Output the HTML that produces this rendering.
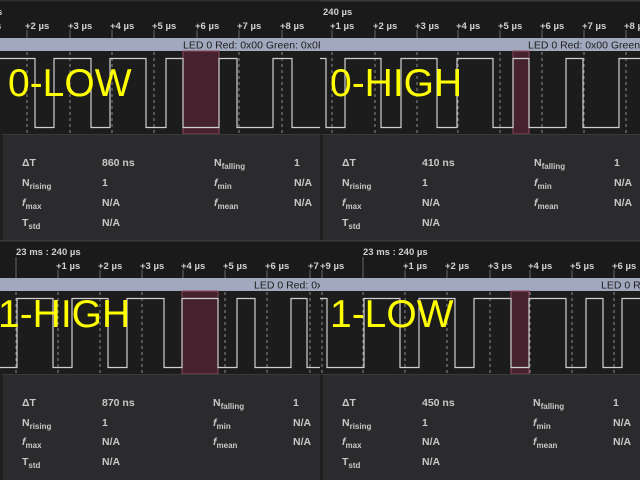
<!DOCTYPE html>
<html><head><meta charset="utf-8"><style>
*{margin:0;padding:0;box-sizing:border-box}
body{width:640px;height:480px;background:#1c1c1c;overflow:hidden;font-family:"Liberation Sans",sans-serif;position:relative}
.q{position:absolute;width:320px;height:240px;overflow:hidden}
.q svg{position:absolute;left:0;top:0}
.st{position:absolute;left:0;top:134px;width:320px;height:106px;background:#2b2b2d;border-top:1px solid #3a3a3c;border-left:3px solid #1e1e1e}
.st div{position:absolute;font-size:10.5px;font-weight:bold;color:#c8c8c8;white-space:nowrap}
.st sub{font-size:8px;vertical-align:-3px}
.st i{font-style:italic;font-weight:bold}
.big{position:absolute;font-size:39px;color:#ffff00;line-height:1}
</style></head><body>

<!-- TL -->
<div class="q" style="left:0;top:0">
<svg width="320" height="134" font-family="Liberation Sans" font-weight="bold" font-size="9.5" fill="#d0d0d0">
<rect x="0" y="0" width="320" height="38" fill="#1a1a1a"/>
<rect x="0" y="0" width="320" height="1.5" fill="#2c2c2c"/>
<text x="-3" y="15">s</text><text x="-4" y="29">s</text>
<g stroke="#8a8a8a" stroke-dasharray="3,3" stroke-width="1">
<line x1="27" y1="52" x2="27" y2="134"/><line x1="70" y1="52" x2="70" y2="134"/><line x1="112" y1="52" x2="112" y2="134"/><line x1="154" y1="52" x2="154" y2="134"/><line x1="197" y1="52" x2="197" y2="134"/><line x1="239" y1="52" x2="239" y2="134"/><line x1="282" y1="52" x2="282" y2="134"/></g>
<g stroke="#666"><line x1="27" y1="30" x2="27" y2="38"/><line x1="70" y1="30" x2="70" y2="38"/><line x1="112" y1="30" x2="112" y2="38"/><line x1="154" y1="30" x2="154" y2="38"/><line x1="197" y1="30" x2="197" y2="38"/><line x1="239" y1="30" x2="239" y2="38"/><line x1="282" y1="30" x2="282" y2="38"/></g>
<text x="25" y="29">+2 µs</text><text x="68" y="29">+3 µs</text><text x="110" y="29">+4 µs</text><text x="152" y="29">+5 µs</text><text x="195" y="29">+6 µs</text><text x="237" y="29">+7 µs</text><text x="280" y="29">+8 µs</text>
<rect x="0" y="38" width="320" height="13" fill="#a0a9bd"/>
<text x="183" y="48.5" font-weight="normal" font-size="10.5" fill="#1e1e1e">LED 0 Red: 0x00 Green: 0x0F B</text>
<rect x="183" y="51" width="36" height="83" fill="#46222f" stroke="#8a4a60"/>
<polyline fill="none" stroke="#cfcfcf" stroke-width="1.2" points="0,58.5 35,58.5 35,127.5 54,127.5 54,58.5 91,58.5 91,127.5 110,127.5 110,58.5 146,58.5 146,127.5 166,127.5 166,58.5 183,58.5 183,127.5 219,127.5 219,58.5 237,58.5 237,127.5 273,127.5 273,58.5 292,58.5 292,127.5 320,127.5"/>
</svg>
<div class="big" style="left:8px;top:64px">0-LOW</div>
<div class="st">
<div style="left:19px;top:22px">ΔT</div><div style="left:99px;top:22px">860 ns</div><div style="left:211px;top:22px">N<sub>falling</sub></div><div style="left:291px;top:22px">1</div>
<div style="left:19px;top:42px">N<sub>rising</sub></div><div style="left:99px;top:42px">1</div><div style="left:211px;top:42px"><i>f</i><sub>min</sub></div><div style="left:291px;top:42px">N/A</div>
<div style="left:19px;top:62px"><i>f</i><sub>max</sub></div><div style="left:99px;top:62px">N/A</div><div style="left:211px;top:62px"><i>f</i><sub>mean</sub></div><div style="left:291px;top:62px">N/A</div>
<div style="left:19px;top:82px">T<sub>std</sub></div><div style="left:99px;top:82px">N/A</div>
</div>
</div>

<!-- TR -->
<div class="q" style="left:320px;top:0">
<svg width="320" height="134" font-family="Liberation Sans" font-weight="bold" font-size="9.5" fill="#d0d0d0">
<rect x="0" y="0" width="320" height="38" fill="#1a1a1a"/>
<rect x="0" y="0" width="320" height="1.5" fill="#3a3a3a"/>
<text x="3" y="15">240 µs</text>
<g stroke="#8a8a8a" stroke-dasharray="3,3"><line x1="12" y1="52" x2="12" y2="134"/><line x1="55" y1="52" x2="55" y2="134"/><line x1="97" y1="52" x2="97" y2="134"/><line x1="138" y1="52" x2="138" y2="134"/><line x1="180" y1="52" x2="180" y2="134"/><line x1="222" y1="52" x2="222" y2="134"/><line x1="264" y1="52" x2="264" y2="134"/><line x1="306" y1="52" x2="306" y2="134"/></g>
<g stroke="#666"><line x1="12" y1="30" x2="12" y2="38"/><line x1="55" y1="30" x2="55" y2="38"/><line x1="97" y1="30" x2="97" y2="38"/><line x1="138" y1="30" x2="138" y2="38"/><line x1="180" y1="30" x2="180" y2="38"/><line x1="222" y1="30" x2="222" y2="38"/><line x1="264" y1="30" x2="264" y2="38"/><line x1="306" y1="30" x2="306" y2="38"/></g>
<text x="10" y="29">+1 µs</text><text x="53" y="29">+2 µs</text><text x="95" y="29">+3 µs</text><text x="136" y="29">+4 µs</text><text x="178" y="29">+5 µs</text><text x="220" y="29">+6 µs</text><text x="262" y="29">+7 µs</text><text x="304" y="29">+8 µs</text>
<rect x="0" y="38" width="320" height="13" fill="#a0a9bd"/>
<text x="208" y="48.5" font-weight="normal" font-size="10.5" fill="#1e1e1e">LED 0 Red: 0x00 Green: 0</text>
<rect x="193" y="51" width="16" height="83" fill="#46222f" stroke="#8a4a60"/>
<polyline fill="none" stroke="#cfcfcf" stroke-width="1.2" points="0,58.5 6,58.5 6,127.5 25,127.5 25,58.5 61,58.5 61,127.5 81,127.5 81,58.5 117,58.5 117,127.5 137,127.5 137,58.5 173,58.5 173,127.5 193,127.5 193,58.5 209,58.5 209,127.5 246,127.5 246,58.5 263,58.5 263,127.5 299,127.5 299,58.5 320,58.5"/>
</svg>
<div class="big" style="left:10px;top:64px">0-HIGH</div>
<div class="st">
<div style="left:19px;top:22px">ΔT</div><div style="left:99px;top:22px">410 ns</div><div style="left:211px;top:22px">N<sub>falling</sub></div><div style="left:291px;top:22px">1</div>
<div style="left:19px;top:42px">N<sub>rising</sub></div><div style="left:99px;top:42px">1</div><div style="left:211px;top:42px"><i>f</i><sub>min</sub></div><div style="left:291px;top:42px">N/A</div>
<div style="left:19px;top:62px"><i>f</i><sub>max</sub></div><div style="left:99px;top:62px">N/A</div><div style="left:211px;top:62px"><i>f</i><sub>mean</sub></div><div style="left:291px;top:62px">N/A</div>
<div style="left:19px;top:82px">T<sub>std</sub></div><div style="left:99px;top:82px">N/A</div>
</div>
</div>

<!-- BL -->
<div class="q" style="left:0;top:240px">
<svg width="320" height="134" font-family="Liberation Sans" font-weight="bold" font-size="9.5" fill="#d0d0d0">
<rect x="0" y="0" width="320" height="38" fill="#1a1a1a"/>
<rect x="0" y="0" width="320" height="1.5" fill="#3a3a3a"/>
<text x="16" y="15">23 ms : 240 µs</text>
<line x1="16" y1="17" x2="16" y2="38" stroke="#666"/>
<g stroke="#8a8a8a" stroke-dasharray="3,3"><line x1="16" y1="52" x2="16" y2="134"/><line x1="58" y1="52" x2="58" y2="134"/><line x1="100" y1="52" x2="100" y2="134"/><line x1="142" y1="52" x2="142" y2="134"/><line x1="183" y1="52" x2="183" y2="134"/><line x1="225" y1="52" x2="225" y2="134"/><line x1="267" y1="52" x2="267" y2="134"/><line x1="310" y1="52" x2="310" y2="134"/></g>
<g stroke="#666"><line x1="58" y1="30" x2="58" y2="38"/><line x1="100" y1="30" x2="100" y2="38"/><line x1="142" y1="30" x2="142" y2="38"/><line x1="183" y1="30" x2="183" y2="38"/><line x1="225" y1="30" x2="225" y2="38"/><line x1="267" y1="30" x2="267" y2="38"/><line x1="310" y1="30" x2="310" y2="38"/></g>
<text x="56" y="29">+1 µs</text><text x="98" y="29">+2 µs</text><text x="140" y="29">+3 µs</text><text x="181" y="29">+4 µs</text><text x="223" y="29">+5 µs</text><text x="265" y="29">+6 µs</text><text x="308" y="29">+7 µs</text>
<rect x="0" y="38" width="320" height="13" fill="#a0a9bd"/>
<text x="254" y="48.5" font-weight="normal" font-size="10.5" fill="#1e1e1e">LED 0 Red: 0x0</text>
<rect x="182" y="51" width="36" height="83" fill="#46222f" stroke="#8a4a60"/>
<polyline fill="none" stroke="#cfcfcf" stroke-width="1.2" points="0,127.5 17,127.5 17,58.5 53,58.5 53,127.5 72,127.5 72,58.5 108,58.5 108,127.5 127,127.5 127,58.5 164,58.5 164,127.5 182,127.5 182,58.5 218,58.5 218,127.5 237,127.5 237,58.5 255,58.5 255,127.5 291,127.5 291,58.5 307,58.5 307,127.5 320,127.5"/>
</svg>
<div class="big" style="left:-2px;top:55px">1-HIGH</div>
<div class="st">
<div style="left:19px;top:22px">ΔT</div><div style="left:99px;top:22px">870 ns</div><div style="left:210px;top:22px">N<sub>falling</sub></div><div style="left:290px;top:22px">1</div>
<div style="left:19px;top:42px">N<sub>rising</sub></div><div style="left:99px;top:42px">1</div><div style="left:210px;top:42px"><i>f</i><sub>min</sub></div><div style="left:290px;top:42px">N/A</div>
<div style="left:19px;top:61px"><i>f</i><sub>max</sub></div><div style="left:99px;top:61px">N/A</div><div style="left:210px;top:61px"><i>f</i><sub>mean</sub></div><div style="left:290px;top:61px">N/A</div>
<div style="left:19px;top:81px">T<sub>std</sub></div><div style="left:99px;top:81px">N/A</div>
</div>
</div>

<!-- BR -->
<div class="q" style="left:320px;top:240px">
<svg width="320" height="134" font-family="Liberation Sans" font-weight="bold" font-size="9.5" fill="#d0d0d0">
<rect x="0" y="0" width="320" height="38" fill="#1a1a1a"/>
<rect x="0" y="0" width="320" height="1.5" fill="#3a3a3a"/>
<text x="43" y="15">23 ms : 240 µs</text>
<line x1="43" y1="17" x2="43" y2="38" stroke="#666"/>
<g stroke="#8a8a8a" stroke-dasharray="3,3"><line x1="2" y1="52" x2="2" y2="134"/><line x1="43" y1="52" x2="43" y2="134"/><line x1="85" y1="52" x2="85" y2="134"/><line x1="127" y1="52" x2="127" y2="134"/><line x1="170" y1="52" x2="170" y2="134"/><line x1="210" y1="52" x2="210" y2="134"/><line x1="252" y1="52" x2="252" y2="134"/><line x1="294" y1="52" x2="294" y2="134"/></g>
<g stroke="#666"><line x1="2" y1="30" x2="2" y2="38"/><line x1="85" y1="30" x2="85" y2="38"/><line x1="127" y1="30" x2="127" y2="38"/><line x1="170" y1="30" x2="170" y2="38"/><line x1="210" y1="30" x2="210" y2="38"/><line x1="252" y1="30" x2="252" y2="38"/><line x1="294" y1="30" x2="294" y2="38"/></g>
<text x="0" y="29">+9 µs</text><text x="83" y="29">+1 µs</text><text x="125" y="29">+2 µs</text><text x="168" y="29">+3 µs</text><text x="208" y="29">+4 µs</text><text x="250" y="29">+5 µs</text><text x="292" y="29">+6 µs</text>
<rect x="0" y="38" width="320" height="13" fill="#a0a9bd"/>
<text x="281" y="48.5" font-weight="normal" font-size="10.5" fill="#1e1e1e">LED 0 Re</text>
<rect x="191" y="51" width="18" height="83" fill="#46222f" stroke="#8a4a60"/>
<polyline fill="none" stroke="#cfcfcf" stroke-width="1.2" points="0,58.5 7,58.5 7,127.5 44,127.5 44,58.5 80,58.5 80,127.5 99,127.5 99,58.5 135,58.5 135,127.5 154,127.5 154,58.5 191,58.5 191,127.5 209,127.5 209,58.5 246,58.5 246,127.5 266,127.5 266,58.5 283,58.5 283,127.5 302,127.5 302,58.5 320,58.5"/>
</svg>
<div class="big" style="left:10px;top:55px">1-LOW</div>
<div class="st">
<div style="left:19px;top:22px">ΔT</div><div style="left:99px;top:22px">450 ns</div><div style="left:210px;top:22px">N<sub>falling</sub></div><div style="left:290px;top:22px">1</div>
<div style="left:19px;top:42px">N<sub>rising</sub></div><div style="left:99px;top:42px">1</div><div style="left:210px;top:42px"><i>f</i><sub>min</sub></div><div style="left:290px;top:42px">N/A</div>
<div style="left:19px;top:61px"><i>f</i><sub>max</sub></div><div style="left:99px;top:61px">N/A</div><div style="left:210px;top:61px"><i>f</i><sub>mean</sub></div><div style="left:290px;top:61px">N/A</div>
<div style="left:19px;top:81px">T<sub>std</sub></div><div style="left:99px;top:81px">N/A</div>
</div>
</div>

</body></html>
